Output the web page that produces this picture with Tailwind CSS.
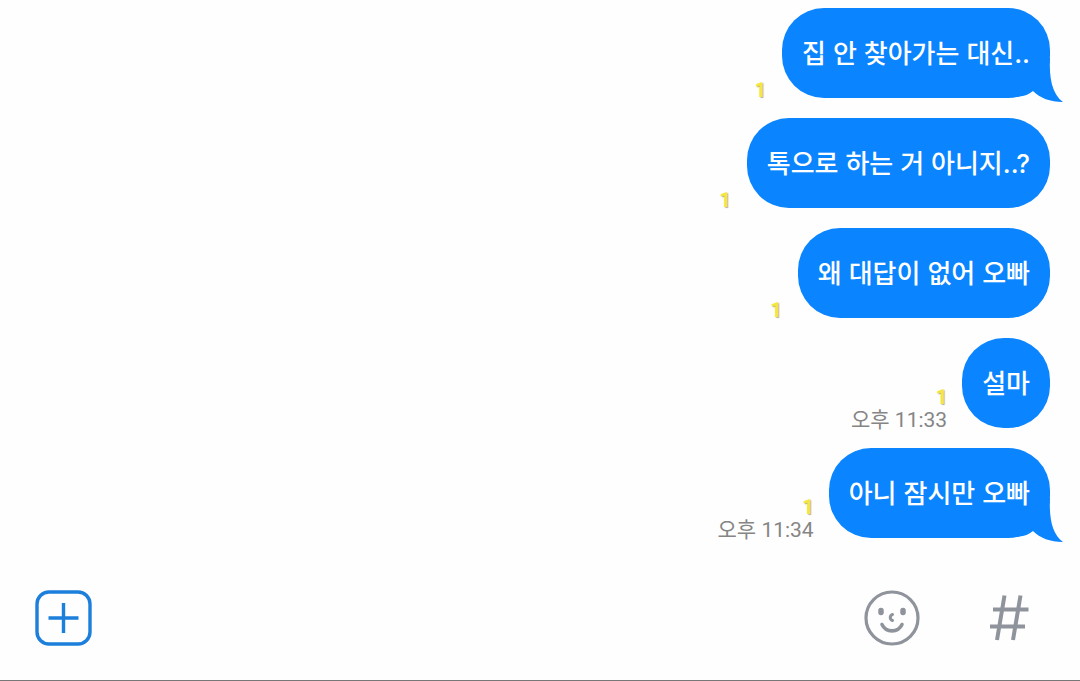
<!DOCTYPE html>
<html lang="ko">
<head>
<meta charset="utf-8">
<meta name="viewport" content="width=device-width, initial-scale=1">
<title>채팅</title>
<script src="https://cdn.jsdelivr.net/npm/@tailwindcss/browser@4"></script>
</head>
<body class="flex min-h-screen flex-col bg-[#fefefe] font-['Roboto','Noto_Sans_CJK_KR',sans-serif]">
<main class="flex flex-1 flex-col items-end gap-5 pt-2 pr-[30px]">
  <div class="flex items-end gap-4">
    <span class="text-[20px] leading-4 font-bold text-[#f5e642] [text-shadow:1px_1px_1px_#b5b08a]">1</span>
    <div class="relative flex h-[90px] items-center rounded-[42px] bg-[#0a84ff] px-5 pt-0.5 font-['Inter','Noto_Sans_CJK_KR',sans-serif] text-[26px] leading-9 font-medium text-white">
      <p>집 안 찾아가는 대신..</p>
      <svg class="absolute -right-[13px] -bottom-1 h-11 w-11" viewBox="0 0 44 44" fill="#0a84ff" aria-hidden="true"><path d="M12 0H31C30 20 33 36 44 44C31 44 21 40 14 33Q8 38 0 38.500V30Z"/></svg>
    </div>
  </div>
  <div class="flex items-end gap-4">
    <span class="text-[20px] leading-4 font-bold text-[#f5e642] [text-shadow:1px_1px_1px_#b5b08a]">1</span>
    <div class="flex h-[90px] items-center rounded-[42px] bg-[#0a84ff] px-5 pt-0.5 font-['Inter','Noto_Sans_CJK_KR',sans-serif] text-[26px] leading-9 font-medium text-white"><p>톡으로 하는 거 아니지..?</p></div>
  </div>
  <div class="flex items-end gap-4">
    <span class="text-[20px] leading-4 font-bold text-[#f5e642] [text-shadow:1px_1px_1px_#b5b08a]">1</span>
    <div class="flex h-[90px] items-center rounded-[42px] bg-[#0a84ff] px-5 pt-0.5 font-['Inter','Noto_Sans_CJK_KR',sans-serif] text-[26px] leading-9 font-medium text-white"><p>왜 대답이 없어 오빠</p></div>
  </div>
  <div class="flex items-end gap-[15px]">
    <div class="flex flex-col items-end gap-[7px]">
      <span class="text-[20px] leading-4 font-bold text-[#f5e642] [text-shadow:1px_1px_1px_#b5b08a]">1</span>
      <time class="text-[21px] leading-4 text-[#858585]">오후 11:33</time>
    </div>
    <div class="flex h-[90px] items-center rounded-[42px] bg-[#0a84ff] px-5 pt-0.5 font-['Inter','Noto_Sans_CJK_KR',sans-serif] text-[26px] leading-9 font-medium text-white"><p>설마</p></div>
  </div>
  <div class="flex items-end gap-[15px]">
    <div class="flex flex-col items-end gap-[7px]">
      <span class="text-[20px] leading-4 font-bold text-[#f5e642] [text-shadow:1px_1px_1px_#b5b08a]">1</span>
      <time class="text-[21px] leading-4 text-[#858585]">오후 11:34</time>
    </div>
    <div class="relative flex h-[90px] items-center rounded-[42px] bg-[#0a84ff] px-5 pt-0.5 font-['Inter','Noto_Sans_CJK_KR',sans-serif] text-[26px] leading-9 font-medium text-white">
      <p>아니 잠시만 오빠</p>
      <svg class="absolute -right-[13px] -bottom-1 h-11 w-11" viewBox="0 0 44 44" fill="#0a84ff" aria-hidden="true"><path d="M12 0H31C30 20 33 36 44 44C31 44 21 40 14 33Q8 38 0 38.500V30Z"/></svg>
    </div>
  </div>
</main>
<footer class="flex items-center justify-between border-b border-[#777] pr-[42px] pb-[34px] pl-[35px]">
  <button type="button" aria-label="추가">
    <svg class="block h-14 w-[57px]" viewBox="0 0 57 56" fill="none" stroke="#1c7fdb" stroke-width="3.400"><rect x="2" y="2" width="53" height="52" rx="12"/><path d="M28.5 13v30M13.500 28h30"/></svg>
  </button>
  <div class="flex items-center gap-[60px]">
    <button type="button" aria-label="이모티콘">
      <svg class="block h-14 w-14" viewBox="0 0 56 56" fill="none" stroke="#8f939b" stroke-linecap="round"><circle cx="28" cy="28" r="26" stroke-width="3.200"/><path d="M17 20.500v2M39 20.500v2" stroke-width="5.500"/><path d="M18 34.500C22 43 34 43 38 34.500" stroke-width="3.600"/><path d="M28.500 24.500C25.500 25.500 25.500 29.500 28.500 30.500" stroke-width="3"/></svg>
    </button>
    <button type="button" aria-label="샵 검색">
      <svg class="block h-14 w-[58px]" viewBox="0 0 58 56" fill="none" stroke="#8f939b" stroke-width="4"><path d="M24.500 5.500L17 50M40.500 5.500L33 50M13 19.500H48.500M10 36.500H45"/></svg>
    </button>
  </div>
</footer>
</body>
</html>
